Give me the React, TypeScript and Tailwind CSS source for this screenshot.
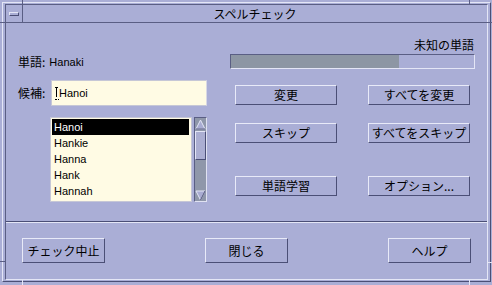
import React from 'react';
import { twMerge } from 'tailwind-merge';

// Motif style spell check dialog (スペルチェック)

const JP = "font-['Noto_Sans_CJK_JP',sans-serif]";
const LATIN = "font-['Liberation_Sans',sans-serif]";

const MotifButton = ({
  className,
  children,
}: {
  className?: string;
  children: React.ReactNode;
}) => {
  return (
    <div
      className={twMerge(
        'flex items-center justify-center w-[102px] h-[20px] border border-t-[#e8eaf8] border-l-[#e8eaf8] border-r-[#4b4f76] border-b-[#4b4f76] text-[12px] leading-none text-black',
        JP,
        className
      )}
    >
      {children}
    </div>
  );
};

const candidates = ['Hanoi', 'Hankie', 'Hanna', 'Hank', 'Hannah'];

const ScrollBar = () => {
  return (
    <div className="flex flex-col w-[13px] h-[85px] ml-[2px] border border-t-[#5a5e84] border-l-[#5a5e84] border-r-[#e0e2f2] border-b-[#e0e2f2] bg-[#8f97aa]">
      <div className="h-[12px] flex items-center justify-center">
        <svg width="11" height="11" viewBox="0 0 11 11">
          <path d="M5.5 1 L10 10 L1 10 Z" fill="#a9acd2" stroke="#e4e6f6" strokeWidth="1" />
          <path d="M10 10 L1 10" stroke="#4b4f76" strokeWidth="1" />
        </svg>
      </div>
      <div className="h-[29px] mt-[1px] bg-[#abaed2] border border-t-[#e4e6f6] border-l-[#e4e6f6] border-r-[#4b4f76] border-b-[#4b4f76]" />
      <div className="grow" />
      <div className="h-[12px] flex items-center justify-center">
        <svg width="11" height="11" viewBox="0 0 11 11">
          <path d="M5.5 10 L10 1 L1 1 Z" fill="#a9acd2" stroke="#e4e6f6" strokeWidth="1" />
          <path d="M10 1 L5.5 10" stroke="#4b4f76" strokeWidth="1" />
        </svg>
      </div>
    </div>
  );
};

const LeftColumn = () => {
  return (
    <div className="flex flex-col w-[189px]">
      <div className={twMerge('mt-[31px] h-[16px] leading-[16px] flex items-center text-[12px] text-black', JP)}>
        <span>単語:</span>
        <span className={twMerge('ml-[4px] text-[11px]', LATIN)}>Hanaki</span>
      </div>

      <div className="mt-[10px] flex items-center h-[26px]">
        <span className={twMerge('w-[33px] text-[12px] text-black', JP)}>候補:</span>
        <div className="flex items-center w-[156px] h-[26px] border border-[#c6c7d6] border-r-[#d8d8e4] bg-[#fffbe4] pl-[3px]">
          <span className="relative w-[3px] h-[13px] mr-[1px]">
            <span className="absolute left-[1px] top-0 w-[1px] h-[10px] bg-black" />
            <span className="absolute left-0 top-0 w-[3px] h-[1px] bg-black" />
            <span className="absolute left-0 top-[12px] w-[4px] h-[1px] border-t border-dotted border-black" />
          </span>
          <span className={twMerge('text-[11px] text-black', LATIN)}>Hanoi</span>
        </div>
      </div>

      <div className="mt-[11px] flex h-[85px] ml-[32px]">
        <div className="w-[143px] h-[85px] border border-[#c6c7d6] bg-[#fffbe4] pt-[1px] px-[1px]">
          {candidates.map((c, i) => (
            <div
              key={c}
              className={twMerge(
                'h-[16px] leading-[16px] pl-[2px] text-[11px] text-black',
                LATIN,
                i === 0 && 'bg-black text-white w-[137px]'
              )}
            >
              {c}
            </div>
          ))}
        </div>
        <ScrollBar />
      </div>
    </div>
  );
};

const RightColumn = () => {
  return (
    <div className="flex flex-col w-[245px] ml-[23px]">
      <div className={twMerge('mt-[13px] h-[16px] leading-[16px] text-right text-[12px] text-black pr-[1px]', JP)}>
        未知の単語
      </div>
      <div className="mt-[2px] h-[15px] flex border border-t-[#5a5e84] border-l-[#5a5e84] border-r-[#e4e6f6] border-b-[#e4e6f6]">
        <div className="w-[168px] h-full bg-[#8d96a4]" />
      </div>

      <div className="mt-[16px] flex justify-between px-[5px]">
        <MotifButton>変更</MotifButton>
        <MotifButton>すべてを変更</MotifButton>
      </div>
      <div className="mt-[18px] flex justify-between px-[5px]">
        <MotifButton>スキップ</MotifButton>
        <MotifButton>すべてをスキップ</MotifButton>
      </div>
      <div className="mt-[33px] flex justify-between px-[5px]">
        <MotifButton>単語学習</MotifButton>
        <MotifButton>オプション...</MotifButton>
      </div>
    </div>
  );
};

export default function App() {
  return (
    <div className="relative w-[492px] h-[285px] bg-[#aaaed6] pl-[2px] pt-[2px] pr-[1px] pb-[3px]">
      <div className="h-full border border-t-[#e4e6f6] border-l-[#e4e6f6] border-r-[#4b4f76] border-b-[#4b4f76] pl-[2px] pt-[1px] pr-[2px] pb-[1px]">
        <div className="h-full flex flex-col border border-t-[#5a5e84] border-l-[#5a5e84] border-r-[#e4e6f6] border-b-[#e4e6f6]">
          {/* title bar */}
          <div className="flex h-[18px] border-b border-[#5a5e84]">
            <div className="w-[17px] border-r border-[#5a5e84] flex items-center justify-center">
              <div className="w-[10px] h-[4px] border-t border-l border-t-[#e4e6f6] border-l-[#e4e6f6] border-b border-r border-b-[#4b4f76] border-r-[#4b4f76]" />
            </div>
            <div className={twMerge('grow flex items-center justify-center text-[12px] text-black pt-[1px]', JP)}>
              スペルチェック
            </div>
          </div>

          {/* client area */}
          <div className="flex h-[199px] pl-[12px] border-b border-[#4b4f76]">
            <LeftColumn />
            <RightColumn />
          </div>
          <div className="h-[1px] bg-[#e4e6f6]" />

          <div className="flex justify-between px-[16px] pt-[15px]">
            <MotifButton className="w-[83px] h-[25px]">チェック中止</MotifButton>
            <MotifButton className="w-[83px] h-[25px]">閉じる</MotifButton>
            <MotifButton className="w-[83px] h-[25px]">ヘルプ</MotifButton>
          </div>
        </div>
      </div>

      {/* frame resize corner ticks */}
      <div className="absolute left-[22px] top-0 w-[1px] h-[5px] bg-[#5a5e84]" />
      <div className="absolute left-[469px] top-0 w-[1px] h-[5px] bg-[#5a5e84]" />
      <div className="absolute left-[22px] bottom-0 w-[1px] h-[5px] bg-[#e4e6f6]" />
      <div className="absolute left-[469px] bottom-0 w-[1px] h-[5px] bg-[#e4e6f6]" />
      <div className="absolute left-0 top-[22px] w-[5px] h-[1px] bg-[#5a5e84]" />
      <div className="absolute right-0 top-[22px] w-[5px] h-[1px] bg-[#5a5e84]" />
      <div className="absolute left-0 top-[261px] w-[5px] h-[1px] bg-[#5a5e84]" />
      <div className="absolute right-0 top-[262px] w-[5px] h-[1px] bg-[#e4e6f6]" />
    </div>
  );
}
